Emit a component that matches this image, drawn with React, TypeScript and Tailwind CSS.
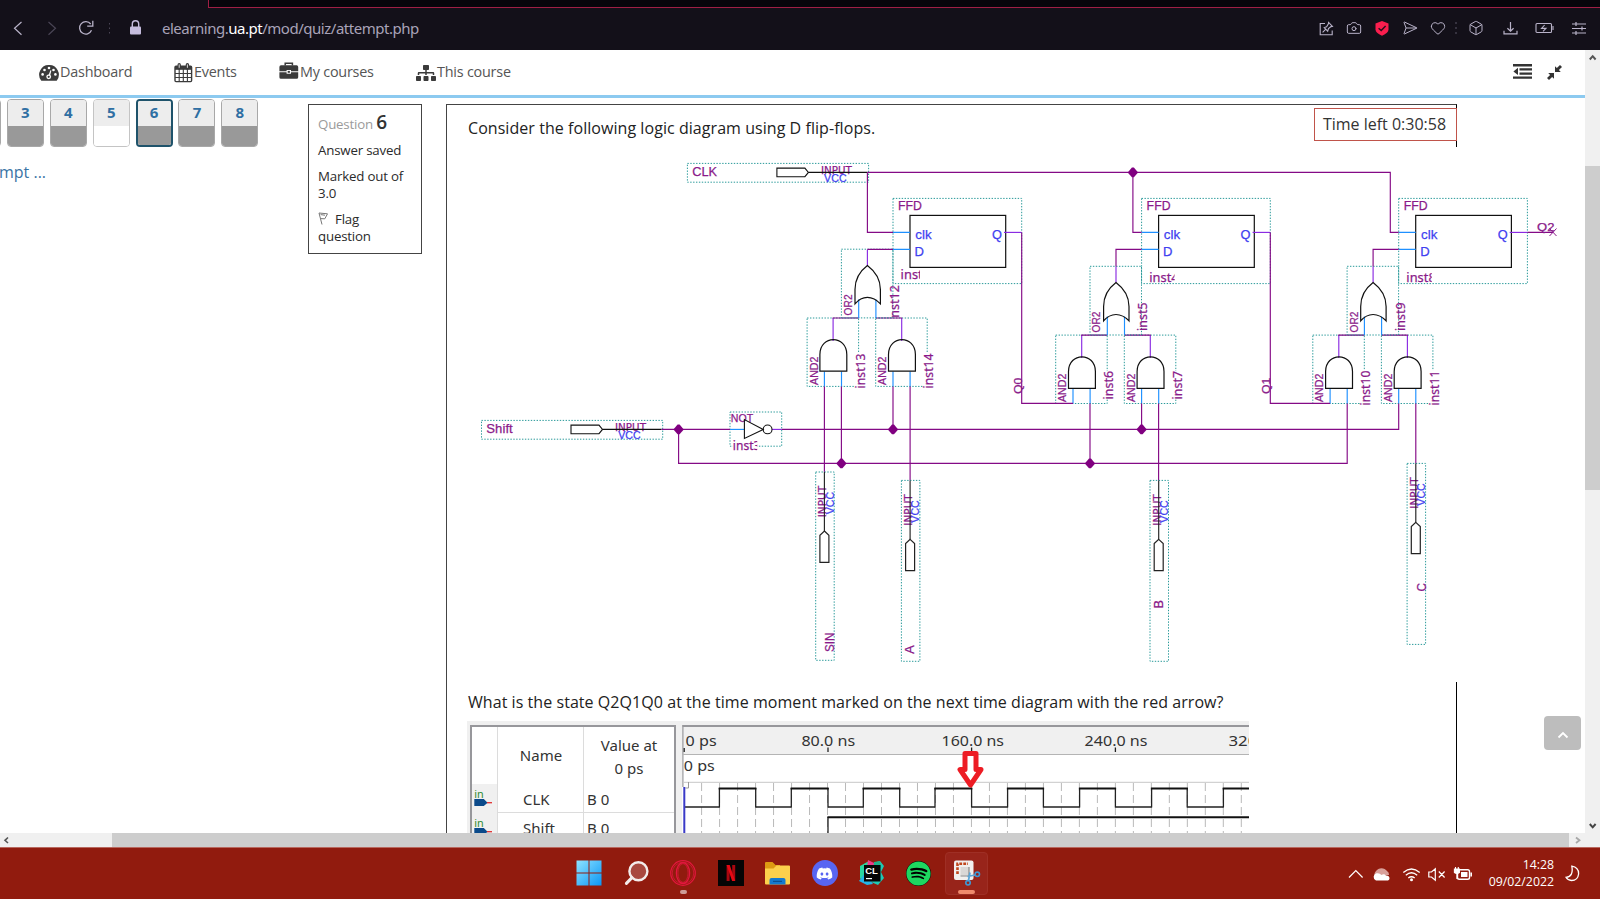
import React from "react";
import { Heart, Camera, Box, SendHorizontal } from "lucide-react";
import { FaSitemap, FaSpotify, FaDiscord } from "react-icons/fa";

const PURPLE = "#840a86";
const VIOLET = "#8a2be2";
const SKY = "#1e90ff";
const TEAL = "#2a9a9a";
const UI = "'Noto Sans', sans-serif";

/* ---------- schematic primitives ---------- */

function Wire({ d, c = PURPLE }: { d: string; c?: string }) {
  return <path d={d} fill="none" stroke={c} strokeWidth={1.15} />;
}

function Dotted({ x1, y1, x2, y2 }: { x1: number; y1: number; x2: number; y2: number }) {
  return (
    <rect x={x1} y={y1} width={x2 - x1} height={y2 - y1} fill="none" stroke={TEAL} strokeWidth={1} strokeDasharray="1.4 1.5" />
  );
}

function Label(props: {
  x: number; y: number; t: string; w?: number; size?: number; c?: string; font?: string; up?: boolean; weight?: number;
}) {
  const { x, y, t, w, size = 12.5, c = "#8a1a8a", font = "'Liberation Sans', sans-serif", up, weight } = props;
  return (
    <text
      x={up ? 0 : x}
      y={up ? 0 : y}
      transform={up ? `translate(${x} ${y}) rotate(-90)` : undefined}
      fill={c}
      stroke={c}
      strokeWidth={weight ? 0 : 0.25}
      fontSize={size}
      fontWeight={weight}
      fontFamily={font}
      textLength={w}
      lengthAdjust="spacingAndGlyphs"
    >
      {t}
    </text>
  );
}

const WIDE = "'Noto Sans', sans-serif";
const MONO = "'DejaVu Sans', sans-serif";

function Node({ x, y }: { x: number; y: number }) {
  return <path d={`M${x - 5.2} ${y}L${x - 1} ${y - 4.8}H${x + 1}L${x + 5.2} ${y}L${x + 1} ${y + 4.8}H${x - 1}Z`} fill="#800080" />;
}

function InputPinH({ x, y, name, w }: { x: number; y: number; name: string; w: number }) {
  return (
    <g>
      <Dotted x1={x} y1={y - 9} x2={x + 181.2} y2={y + 9.8} />
      <Label x={x + 4.8} y={y + 3.6} t={name} w={w} size={13} />
      <path d={`M${x + 89.5} ${y - 4.3}H${x + 117.5}L${x + 121} ${y}L${x + 117.5} ${y + 4.3}H${x + 89.5}Z`} fill="none" stroke="#111" strokeWidth={1.1} />
      <Label x={x + 133.5} y={y + 1.8} t="INPUT" w={31} size={11} font={MONO} />
      <Label x={x + 136.7} y={y + 9.4} t="VCC" w={22.5} size={11} c="#4040f0" />
      <Wire d={`M${x + 121} ${y}H${x + 180}`} c="#111" />
    </g>
  );
}

function InputPinV({ x, y, bottom, name, nx, ny, w }: {
  x: number; y: number; bottom: number; name: string; nx: number; ny: number; w: number;
}) {
  return (
    <g>
      <Dotted x1={x - 8.7} y1={y} x2={x + 9.8} y2={bottom} />
      <Label x={x + 1.8} y={y + 45.3} t="INPUT" w={31.5} size={10.5} font={MONO} up />
      <Label x={x + 9.2} y={y + 42.3} t="VCC" w={22.5} size={11} c="#4040f0" up />
      <Wire d={`M${x} ${y}V${y + 59}`} c="#222" />
      <path d={`M${x} ${y + 59}L${x + 4.5} ${y + 63.2}V${y + 90.3}H${x - 4.5}V${y + 63.2}Z`} fill="none" stroke="#222" strokeWidth={1.2} />
      <Label x={nx} y={ny} t={name} w={w} size={12.5} up />
    </g>
  );
}

function FlipFlop({ x, inst, dy, cut }: { x: number; inst: string; dy: number; cut: number }) {
  return (
    <g>
      <Dotted x1={x} y1={198.4} x2={x + 128.7} y2={283.6} />
      <rect x={x + 17} y={215.4} width={95.7} height={52} fill="none" stroke="#111" strokeWidth={1.2} />
      <Wire d={`M${x} 232.4h17M${x} 249.4h17`} c={SKY} />
      <Wire d={`M${x + 111} 232.4h17.7`} c={VIOLET} />
      <Label x={x + 5} y={210} t="FFD" w={24} size={13} />
      <Label x={x + 22.2} y={239} t="clk" w={16.5} size={13.5} c="#4040f0" />
      <Label x={x + 21.5} y={256} t="D" w={9.5} size={13.5} c="#4040f0" />
      <Label x={x + 99} y={239} t="Q" w={10} size={13.5} c="#4040f0" />
      <svg x={x + 6} y={266} width={cut - 6} height={17} viewBox={`${x + 6} 266 ${cut - 6} 17`}>
        <Label x={x + 7.6} y={dy} t={inst} size={12.8} font={WIDE} />
      </svg>
    </g>
  );
}

function OrGate({ x, y, inst, base, len }: { x: number; y: number; inst: string; base: number; len: number }) {
  return (
    <g>
      <Dotted x1={x - 26} y1={y - 16.2} x2={x + 25.5} y2={y + 52.5} />
      <Wire d={`M${x} ${y}v-16`} c={VIOLET} />
      <Wire d={`M${x - 8.7} ${y + 34}V${y + 52.5}M${x + 8.5} ${y + 34}V${y + 52.5}`} c={SKY} />
      <path
        d={`M${x} ${y}C${x - 8} ${y + 6} ${x - 12.4} ${y + 15} ${x - 12.4} ${y + 24}V${y + 38.4}Q${x - 7} ${y + 32} ${x} ${y + 32}T${x + 13} ${y + 38.4}V${y + 24}C${x + 13} ${y + 15} ${x + 8} ${y + 6} ${x} ${y}Z`}
        fill="none" stroke="#111" strokeWidth={1.2}
      />
      <Label x={x - 15.6} y={y + 50} t="OR2" w={21} size={11} up />
      <svg x={x + 18} y={y + 10} width={16} height={42.5} viewBox={`${x + 18} ${y + 10} 16 42.5`}>
        <Label x={x + 31.4} y={base} t={inst} w={len} size={12.8} font={WIDE} up />
      </svg>
    </g>
  );
}

function AndGate({ x, y, inst }: { x: number; y: number; inst: string }) {
  const two = inst.length > 5;
  return (
    <g>
      <Dotted x1={x - 26} y1={y} x2={x + 25.5} y2={y + 68.4} />
      <rect x={x + 22} y={two ? y + 35 : y + 36} width={10} height={two ? 35 : 28} fill="#fff" />
      <Wire d={`M${x} ${y}v23`} c={VIOLET} />
      <Wire d={`M${x - 8.7} ${y + 53.4}v15M${x + 8.4} ${y + 53.4}v15`} c={SKY} />
      <path d={`M${x - 13.2} ${y + 53.2}V${y + 36.5}C${x - 13.2} ${y + 16.8} ${x + 13.7} ${y + 16.8} ${x + 13.7} ${y + 36.5}V${y + 53.2}Z`} fill="none" stroke="#111" strokeWidth={1.2} />
      <Label x={x - 15.4} y={y + 67} t="AND2" w={28.5} size={11} up />
      <Label x={x + 31.6} y={two ? y + 70.4 : y + 64.4} t={inst} w={two ? 35 : 28.5} size={12.8} font={WIDE} up />
    </g>
  );
}

function Schematic() {
  const stages = [
    { dx: 0, dy: 0, ands: ["inst13", "inst14"] },
    { dx: 248.6, dy: 17.1, ands: ["inst6", "inst7"] },
    { dx: 505.7, dy: 17.1, ands: ["inst10", "inst11"] },
  ];
  return (
    <svg className="-ml-px block shrink-0 bg-white" width={1105} height={535} viewBox="467 147 1105 535">
      <InputPinH x={687.4} y={172.4} name="CLK" w={25} />
      <InputPinH x={481.5} y={429.4} name="Shift" w={26.5} />

      {stages.map((s) => (
        <g key={s.dx}>
          <AndGate x={833.1 + s.dx} y={318 + s.dy} inst={s.ands[0]} />
          <AndGate x={901.7 + s.dx} y={318 + s.dy} inst={s.ands[1]} />
          <Wire d={`M${832.5 + s.dx} ${318 + s.dy}h26.2M${876 + s.dx} ${318 + s.dy}h26.2`} />
        </g>
      ))}
      <OrGate x={867.4} y={265.4} inst="inst12" base={321} len={36} />
      <OrGate x={1116} y={282.5} inst="inst5" base={331} len={28.5} />
      <OrGate x={1373.1} y={282.5} inst="inst9" base={331} len={28.5} />
      <FlipFlop x={893} inst="inst" dy={278.6} cut={27} />
      <FlipFlop x={1141.6} inst="inst4" dy={282.2} cut={33} />
      <FlipFlop x={1398.7} inst="inst8" dy={282.2} cut={33} />

      <Dotted x1={730} y1={412} x2={781.7} y2={446.2} />
      <rect x={732.5} y={440} width={25} height={10} fill="#fff" />
      <Label x={730.8} y={421.8} t="NOT" w={22.5} size={11} />
      <svg x={731} y={438} width={26.2} height={14} viewBox="731 438 26.2 14">
        <Label x={732.8} y={449.8} t="inst3" size={12} font={WIDE} />
      </svg>
      <Wire d="M730 429.4h14.5" c={SKY} />
      <Wire d="M772 429.4h9.7" c={VIOLET} />
      <path d="M744.4 419.6V438.4L763.2 429.4Z" fill="none" stroke="#111" strokeWidth={1.1} />
      <circle cx={767.6} cy={429.4} r={4.4} fill="none" stroke="#111" strokeWidth={1.1} />

      <Wire d="M867.4 172.4H1390.3V232.4H1398.7M867.4 172.4V232.4H893M1132.9 172.4V232.4H1141.6" />
      <Wire d="M867.4 249.4H893M1116 266.5V249.4H1141.6M1373.1 266.5V249.4H1398.7" />
      <Wire d="M1021.7 232.4V403.4H1073M1270.3 232.4V403.4H1330.1M1527.4 232.4H1553" />
      <Wire d="M661.5 429.4H730M781.7 429.4H1398.7V403.5M678.6 429.4V463.4H1347.2V403.5" />
      <Wire d="M841.4 386.4V463.4M893 386.4V429.4M1090 403.5V463.4M1141.6 403.5V429.4" />
      <Wire d="M824.4 386.4V472M910.1 386.4V480.4M1158.6 403.5V480.4M1415.8 403.5V463.4" />
      <path d="M1549.500 228.500l7 7.500M1556.500 228.500l-7 7.500" stroke="#8a1a8a" strokeWidth={1} />

      <Node x={678.6} y={429.4} />
      <Node x={893} y={429.4} />
      <Node x={1141.6} y={429.4} />
      <Node x={841.4} y={463.4} />
      <Node x={1090} y={463.4} />
      <Node x={1132.9} y={172.4} />

      <Label x={1021.6} y={394} t="Q0" w={16.5} size={11.5} up />
      <Label x={1270.2} y={394} t="Q1" w={16.5} size={11.5} up />
      <Label x={1537} y={230.8} t="Q2" w={17.5} size={11.5} />

      <InputPinV x={824.4} y={472} bottom={660.3} name="SIN" nx={834} ny={652} w={19.5} />
      <InputPinV x={910.1} y={480.4} bottom={661.3} name="A" nx={914} ny={653.7} w={8.5} />
      <InputPinV x={1158.7} y={480.4} bottom={661.3} name="B" nx={1163.4} ny={608.4} w={8.5} />
      <InputPinV x={1415.8} y={463.4} bottom={644.4} name="C" nx={1425.5} ny={591.5} w={8.5} />
    </svg>
  );
}

/* ---------- timing diagram ---------- */

const EDGES = [719.4, 755.7, 791.3, 828, 863.3, 899.7, 935, 971.6, 1007.6, 1043.4, 1079.6, 1115.4, 1151.6, 1187.2, 1223.4];

function Waveform() {
  let low = "M684 807H719.4";
  let high = "";
  let sides = "";
  EDGES.forEach((x, i) => {
    const next = EDGES[i + 1] ?? 1249;
    sides += `M${x} 788V807.5`;
    if (i % 2 === 0) high += `M${x - 0.7} 788.4H${next + 0.7}`;
    else low += `M${x} 807H${next}`;
  });
  const grid = Array.from({ length: 31 }, (_, i) => 701.6 + i * 17.99);
  const scale: [string, number, number][] = [
    ["0 ps", 685.6, 31], ["80.0 ns", 801.4, 53.8], ["160.0 ns", 941.5, 62.5], ["240.0 ns", 1084.6, 62.9], ["320.0 ns", 1228.4, 66],
  ];
  return (
    <svg className="block shrink-0" width={567} height={112} viewBox="682 721 567 112">
      <rect x={682} y={721} width={567} height={34} fill="#f0f0f0" />
      <rect x={683} y={754} width={566} height={80} fill="#fff" />
      <rect x={682.5} y={725} width={567} height={2} fill="#97979b" />
      <rect x={682.3} y={725} width={1.2} height={62} fill="#97979b" />
      <rect x={683} y={754} width={566} height={1} fill="#b4b4b4" />
      <rect x={684} y={781.8} width={565} height={1} fill="#c8c8c8" />
      {scale.map(([t, x, w]) => (
        <Label key={t} x={x} y={746} t={t} w={w} size={15} c="#333" font={UI} weight={400} />
      ))}
      <Label x={683.8} y={771} t="0 ps" w={31} size={15} c="#333" font={UI} weight={400} />
      <path d="M684.2 748V752M828 747.5V752M971.6 747.5V752M1115.4 747.5V752" stroke="#222" strokeWidth={1.3} />
      {grid.map((x) => (
        <path key={x} d={`M${x} 783V833`} stroke="#b9b9b9" strokeWidth={1} strokeDasharray="8 4" />
      ))}
      <path d={low} stroke="#222" strokeWidth={1.3} fill="none" />
      <path d={sides} stroke="#222" strokeWidth={1.3} fill="none" />
      <path d={high} stroke="#111" strokeWidth={2} fill="none" />
      <path d="M828 833V817" stroke="#222" strokeWidth={1.3} />
      <path d="M827.4 817.2H1249" stroke="#111" strokeWidth={2} />
      <path d="M688.5 782v6h-3" stroke="#999" fill="none" />
      <rect x={683.3} y={787} width={2} height={46} fill="#3a3ac8" />
      <path d="M965 753.5H976V769.5H981L970.5 785L960 769.5H965Z" fill="#fff" stroke="#ed1c24" strokeWidth={5} strokeLinejoin="round" />
    </svg>
  );
}

function SignalRow({ name, h }: { name: string; h: string }) {
  return (
    <div className={`flex shrink-0 ${h}`}>
      <div className="w-[26px] border-r border-[#dcdcdc] bg-[#f0f0f0]">
        <svg width={25} height={28} viewBox="472 784 25 28" className="block">
          <text x={474.3} y={798} fontSize={11.5} fill="#2e8b2e" fontFamily={UI} textLength={9.5} lengthAdjust="spacingAndGlyphs">in</text>
          <path d="M474.3 799h9.500l3.800 3.700-3.800 3.300h-9.500z" fill="#0b4a8a" />
          <path d="M487 802.7h5" stroke="#e03030" strokeWidth={1.3} />
        </svg>
      </div>
      <div className="w-[86px] border-r border-b border-[#dcdcdc] pl-[25px] text-[15px] leading-[31px]">{name}</div>
      <div className="grow border-b border-[#dcdcdc] pl-[3px] text-[15px] leading-[31px]">B 0</div>
    </div>
  );
}

function SignalTable() {
  return (
    <div className="flex h-[112px] w-[215px] shrink-0 bg-[#f0f0f0] pt-[4px] pl-[3px] font-['Noto_Sans',sans-serif]">
      <div className="flex w-[206px] flex-col overflow-hidden border-x-2 border-t-2 border-[#97979b] bg-white text-[#333]">
        <div className="flex h-[57px] shrink-0">
          <div className="w-[26px] border-r border-[#dcdcdc]" />
          <div className="w-[86px] border-r border-[#dcdcdc] pt-[13px] pl-px text-center text-[15px] leading-[30px]">Name</div>
          <div className="grow pt-[7px] text-center text-[15px] leading-[22.5px]">
            Value at
            <br />0 ps
          </div>
        </div>
        <SignalRow name="CLK" h="h-[29px]" />
        <SignalRow name="Shift" h="h-[29px]" />
      </div>
    </div>
  );
}

/* ---------- browser chrome ---------- */

function BrowserBar() {
  return (
    <div className="flex h-[50px] shrink-0 flex-col bg-[#131019]">
      <div className="flex h-[8px] shrink-0">
        <div className="ml-[208px] grow border-b border-l border-[#a01f45] bg-[#07050b]" />
      </div>
      <div className="flex h-[40px] items-center text-[#b9b3c9]">
        <svg width={160} height={40} viewBox="0 8 160 40" fill="none" className="shrink-0">
          <path d="M21.5 22L14.5 28.3L21.5 34.8" stroke="#b9b3c9" strokeWidth={1.2} />
          <path d="M48.5 22L55.5 28.3L48.5 34.8" stroke="#4a4555" strokeWidth={1.2} />
          <path d="M91.5 30.3A6.2 6.2 0 1 1 90.7 24" stroke="#b9b3c9" strokeWidth={1.3} />
          <path d="M92.8 20.8V26.2H87.2" stroke="#b9b3c9" strokeWidth={1.3} />
          <path d="M109.5 23v11" stroke="#4a4555" strokeDasharray="1.5 3" />
          <rect x={130} y={26.6} width={11} height={8} rx={1} fill="#c5bcdd" />
          <path d="M132.3 27V24a3.2 3.2 0 0 1 6.4 0v3" stroke="#c5bcdd" strokeWidth={1.4} />
        </svg>
        <div className="ml-[2px] w-[300px] font-['Noto_Sans',sans-serif] text-[15px] tracking-[-0.48px] whitespace-nowrap text-[#a9a3b8]">
          elearning.<span className="text-white">ua.pt</span>/mod/quiz/attempt.php
        </div>
        <div className="ml-auto flex items-center pr-[13px]">
          <svg width={15} height={15} viewBox="0 0 15 15" fill="none" stroke="currentColor" strokeWidth={1.1}>
            <path d="M6 2.500H1.200V13.800H13.200V9.500M3.600 11.400L6.600 8.400M5.200 6.600L8.700 10.100L9.500 7.500L12 5.600L13.400 5.400L9.600 1.400L9.400 2.900L7.600 5.700Z" />
          </svg>
          <Camera className="ml-[12px]" size={16} strokeWidth={1.5} />
          <svg className="ml-[13px]" width={14} height={15} viewBox="0 0 14 15">
            <path d="M7 0L13.5 2.4V8.6Q13.5 12 7 14.8Q.5 12 .5 8.6V2.4Z" fill="#fa1e4e" />
            <path d="M3.6 7.2L6.2 9.6L10.6 5" fill="none" stroke="#26101a" strokeWidth={1.4} />
          </svg>
          <SendHorizontal className="ml-[13px]" size={16} strokeWidth={1.5} />
          <Heart className="ml-[12px]" size={16} strokeWidth={1.5} />
          <svg className="ml-[8px]" width={4} height={14} viewBox="0 0 4 14"><path d="M2 1v12" stroke="#4a4555" strokeWidth={1.3} strokeDasharray="2 3" /></svg>
          <Box className="ml-[10px]" size={16} strokeWidth={1.5} />
          <svg className="ml-[19px]" width={15} height={15} viewBox="0 0 15 15" fill="none" stroke="currentColor" strokeWidth={1.2}>
            <path d="M7.5 1V10M4.4 7.2L7.5 10.2L10.6 7.2M1 9.7V12.8H14V9.7" />
          </svg>
          <svg className="ml-[17px]" width={19} height={12} viewBox="0 0 19 12" fill="none" stroke="currentColor" strokeWidth={1.1}>
            <rect x={1} y={1.5} width={15.5} height={9} rx={1} />
            <path d="M18 4v4M9.6 3L6.5 6.4H11L8 9.4" />
          </svg>
          <svg className="ml-[17px]" width={16} height={15} viewBox="0 0 16 15" fill="none" stroke="currentColor" strokeWidth={1.2}>
            <path d="M1 3h14M1 7.5h14M1 12h14M5 1v4M11 5.5v4M5 10v4" />
          </svg>
        </div>
      </div>
    </div>
  );
}

/* ---------- site header ---------- */

function GaugeIcon() {
  return (
    <svg width={20} height={16} viewBox="0 0 20 16">
      <path d="M10 0A9.6 9.6 0 0 0 2 15.2Q2.2 15.7 2.8 15.7H17.2Q17.8 15.7 18 15.2A9.6 9.6 0 0 0 10 0Z" fill="#3b3b3b" />
      <g fill="#fff">
        <circle cx={3.6} cy={9.4} r={1.3} /><circle cx={5.5} cy={5} r={1.3} /><circle cx={10} cy={3} r={1.3} />
        <circle cx={14.5} cy={5} r={1.3} /><circle cx={16.4} cy={9.4} r={1.3} /><circle cx={9.7} cy={11.8} r={2.4} />
        <path d="M9.2 11L11.4 5.2L12.4 5.5L10.9 11.6Z" />
      </g>
      <circle cx={9.7} cy={11.8} r={1.1} fill="#3b3b3b" />
    </svg>
  );
}

function CalendarIcon() {
  return (
    <svg width={19} height={20} viewBox="0 0 19 20" fill="none" stroke="#3b3b3b">
      <rect x={1} y={3.2} width={16.6} height={15.4} rx={1} strokeWidth={1.4} />
      <path d="M1 5H17.6" strokeWidth={3.6} />
      <path d="M1 10.5H17.6M1 14.5H17.6M5.2 6V18.5M9.3 6V18.5M13.4 6V18.5" strokeWidth={1.1} />
      <path d="M5.2 1.8V5M13.4 1.8V5" strokeWidth={3.4} strokeLinecap="round" />
      <path d="M5.2 1.4V4.8M13.4 1.4V4.8" stroke="#ddd" strokeWidth={1} />
    </svg>
  );
}

function BriefcaseIcon() {
  return (
    <svg width={20} height={18} viewBox="0 0 20 18">
      <path d="M6.2 3.4V1.2H13.4V3.4" fill="none" stroke="#3b3b3b" strokeWidth={1.5} />
      <path d="M2 3.3H17.6Q19.2 3.3 19.2 4.9V9.2H12V8H7.6V9.2H.4V4.9Q.4 3.3 2 3.3Z" fill="#3b3b3b" />
      <path d="M.4 10.2H7.6V11.8H12V10.2H19.2V15.2Q19.2 16.8 17.6 16.8H2Q.4 16.8 .4 15.2Z" fill="#3b3b3b" />
      <rect x={8.7} y={8.9} width={2.2} height={1.9} fill="#3b3b3b" />
    </svg>
  );
}

function NavItem({ icon, label, w }: { icon: React.ReactNode; label: string; w: string }) {
  return (
    <div className={`flex ${w} items-center gap-[1px] whitespace-nowrap`}>
      {icon}
      <span className="-mt-[2px]">{label}</span>
    </div>
  );
}

function SiteHeader() {
  return (
    <header className="flex h-[48px] shrink-0 border-b-[3px] border-[#8ccaf0] bg-white pl-[39px] text-[14.4px] tracking-[-0.22px] text-[#555]">
      <NavItem icon={<GaugeIcon />} label="Dashboard" w="w-[135px]" />
      <NavItem icon={<CalendarIcon />} label="Events" w="w-[105px]" />
      <NavItem icon={<span className="-mt-[3px]"><BriefcaseIcon /></span>} label="My courses" w="w-[137px]" />
      <NavItem icon={<FaSitemap size={20} color="#3b3b3b" />} label="This course" w="w-[120px]" />
      <div className="mr-[23px] ml-auto flex items-center gap-[15px]">
        <svg className="-mt-[2px]" width={19} height={15} viewBox="0 0 19 15" fill="#333">
          <path d="M0 0H19V2.4H0ZM6.5 4.2H19V6.6H6.5ZM6.5 8.4H19V10.8H6.5ZM0 12.4H19V14.8H0ZM5 3.8V11L.4 7.4Z" />
        </svg>
        <svg width={15} height={15} viewBox="0 0 15 15" fill="#333">
          <path d="M8 7V1.2L9.9 3.1L13 0L15 2L11.9 5.1L13.8 7ZM7 8V13.8L5.1 11.9L2 15L0 13L3.1 9.9L1.2 8Z" />
        </svg>
      </div>
    </header>
  );
}

/* ---------- quiz page ---------- */

function QuizButton({ n, state }: { n: string; state: "done" | "empty" | "current" }) {
  const frame = state === "current" ? "border-2 border-[#1f536b]" : state === "empty" ? "border border-[#c4c4c4]" : "border border-[#a8a8a8]";
  return (
    <div className={`flex h-[48px] w-[37px] shrink-0 flex-col overflow-hidden rounded-[4px] ${frame}`}>
      <div className={`${state === "current" ? "h-[25px] leading-[23px]" : "h-[26px] leading-[25px]"} shrink-0 bg-[#ededed] text-center text-[15px] font-bold text-[#2f6fa3]`}>{n}</div>
      <div className={`grow ${state === "empty" ? "bg-white" : "bg-[#999]"}`} />
    </div>
  );
}

function Sidebar() {
  return (
    <aside className="flex w-[308px] shrink-0 flex-col overflow-hidden pt-[1px]">
      <div className="-ml-[36px] flex gap-[5.9px]">
        <QuizButton n="2" state="done" />
        <QuizButton n="3" state="done" />
        <QuizButton n="4" state="done" />
        <QuizButton n="5" state="empty" />
        <QuizButton n="6" state="current" />
        <QuizButton n="7" state="done" />
        <QuizButton n="8" state="done" />
      </div>
      <div className="mt-[13px] -ml-px text-[16px] leading-[24px] text-[#3a73a5]">mpt ...</div>
    </aside>
  );
}

function QuestionInfo() {
  return (
    <div className="mt-[6px] flex h-[150px] w-[114px] shrink-0 flex-col border border-[#444] pl-[9px] text-[13.3px] leading-[17.3px] tracking-[-0.2px] text-[#2b2b2b]">
      <div className="mt-[5px] h-[24px] leading-[24px] whitespace-nowrap text-[#9b9b9b]">
        Question <span className="text-[19px] font-semibold text-[#333]">6</span>
      </div>
      <div className="mt-[8px] whitespace-nowrap">Answer saved</div>
      <div className="mt-[9px] leading-[17px] whitespace-nowrap">Marked out of<br />3.0</div>
      <div className="mt-[9px] leading-[17px]">
        <svg className="mr-[7px] inline-block align-[-1px]" width={10} height={13} viewBox="0 0 10 13" fill="none" stroke="#777" strokeWidth={1}>
          <path d="M1 1L4 12.5M1 1L9.5 1.8L6.8 6.8L2.6 6.6M2.6 2.6L7 3.2" />
        </svg>
        Flag<br />question
      </div>
    </div>
  );
}

function VerticalScrollbar() {
  return (
    <div className="flex w-[15px] shrink-0 flex-col items-center bg-[#f0f0f0]">
      <svg width={15} height={15} viewBox="0 0 15 15"><path d="M4.8 9.5L7.7 6.2L10.6 9.5" fill="none" stroke="#555" strokeWidth={2} /></svg>
      <div className="mt-[101px] h-[324px] w-full bg-[#cdcdcd]" />
      <svg className="mt-auto" width={15} height={15} viewBox="0 0 15 15"><path d="M4.8 6L7.7 9.3L10.6 6" fill="none" stroke="#444" strokeWidth={2} /></svg>
    </div>
  );
}

function HorizontalScrollbar() {
  return (
    <div className="flex h-[14px] shrink-0 items-center bg-[#f0f0f0]">
      <svg width={14} height={14} viewBox="0 0 14 14"><path d="M8 4.5L5 7.3L8 10" fill="none" stroke="#555" strokeWidth={1.6} /></svg>
      <div className="ml-[98px] h-full w-[1457px] bg-[#cdcdcd]" />
      <svg className="ml-[2px]" width={14} height={14} viewBox="0 0 14 14"><path d="M5 4.5L8.5 7.3L5 10" fill="none" stroke="#a8a8a8" strokeWidth={1.8} /></svg>
    </div>
  );
}

function Page() {
  return (
    <div className="flex h-[783px] shrink-0">
      <div className="relative flex w-[1585px] shrink-0 flex-col overflow-hidden bg-white">
        <SiteHeader />
        <div className="flex grow overflow-hidden">
          <Sidebar />
          <QuestionInfo />
          <main className="mt-[6px] ml-[24px] flex h-[740px] w-[1011px] shrink-0 flex-col border-t border-r border-l border-[#444] border-r-black pl-[21px] text-[16px] tracking-[0.055px] text-[#222]">
            <p className="h-[42px] shrink-0 pt-[11px] leading-[24px] whitespace-nowrap">Consider the following logic diagram using D flip-flops.</p>
            <Schematic />
            <p className="h-[39px] shrink-0 pt-[8px] leading-[24px] whitespace-nowrap">
              What is the state Q2Q1Q0 at the time moment marked on the next time diagram with the red arrow?
            </p>
            <div className="-ml-px flex shrink-0 tracking-normal">
              <SignalTable />
              <Waveform />
            </div>
          </main>
        </div>
        <div className="absolute top-[58px] left-[1314px] flex h-[33px] w-[143px] items-center justify-center border border-[#c0534a] bg-white pr-[2px] pb-[2px] text-[16px] whitespace-nowrap text-[#333]">
          Time left 0:30:58
        </div>
        <div className="absolute top-[666px] left-[1544px] flex h-[34px] w-[37px] items-center justify-center rounded-[4px] bg-[#bdbdbd] pt-[3px]">
          <svg width={12} height={8} viewBox="0 0 12 8"><path d="M1.5 6.5L6 2L10.5 6.5" fill="none" stroke="#fff" strokeWidth={1.8} /></svg>
        </div>
      </div>
      <VerticalScrollbar />
    </div>
  );
}

/* ---------- taskbar ---------- */

function TaskIcon({ children }: { children: React.ReactNode }) {
  return <div className="flex h-[26px] w-[47px] shrink-0 items-center justify-center">{children}</div>;
}

function Taskbar() {
  return (
    <div className="flex h-[52px] shrink-0 border-t border-[#b8685f] bg-[#911b0e]">
      <div className="ml-[565px] flex pt-[12px]">
        <TaskIcon>
          <svg width={26} height={26} viewBox="0 0 26 26">
            <defs><linearGradient id="win" x1="0" y1="0" x2="1" y2="1"><stop offset="0" stopColor="#8fe3ff" /><stop offset="1" stopColor="#0a96f5" /></linearGradient></defs>
            <path d="M.5.5H12.5V12.5H.5ZM13.5.5H25.5V12.5H13.5ZM.5 13.5H12.5V25.5H.5ZM13.5 13.5H25.5V25.5H13.5Z" fill="url(#win)" />
          </svg>
        </TaskIcon>
        <TaskIcon>
          <svg width={26} height={26} viewBox="0 0 26 26" fill="none">
            <circle cx={15.4} cy={11.3} r={9} fill="#a9483f" stroke="#f3eceb" strokeWidth={2.4} />
            <path d="M9 17.6L3.4 23.4" stroke="#f3eceb" strokeWidth={3} strokeLinecap="round" />
          </svg>
        </TaskIcon>
        <div className="flex w-[48px] flex-col items-center">
          <svg width={26} height={26} viewBox="0 0 26 26" fill="none" stroke="#e3173e" className="shrink-0">
            <circle cx={13} cy={13} r={12.3} strokeWidth={1.2} />
            <circle cx={13} cy={13} r={10.8} strokeWidth={0.7} />
            <ellipse cx={13} cy={13} rx={6.6} ry={10.4} strokeWidth={1.3} />
            <ellipse cx={13} cy={13} rx={5.1} ry={9.4} strokeWidth={0.7} />
          </svg>
          <div className="mt-[4px] h-[4px] w-[7px] rounded-full bg-[#cf9c97]" />
        </div>
        <TaskIcon>
          <svg width={26} height={26} viewBox="0 0 26 26">
            <rect width={26} height={26} fill="#050505" />
            <path d="M8.6 5H11.6V21H8.6ZM14.2 5H17.2V21H14.2Z" fill="#a8070f" />
            <path d="M8.6 5H11.7L17.2 21H14.1Z" fill="#e50914" />
          </svg>
        </TaskIcon>
        <TaskIcon>
          <svg width={27} height={26} viewBox="0 0 27 26">
            <path d="M1 3Q1 2 2 2H8.5L11.5 5H16V10H1Z" fill="#dd9a12" />
            <path d="M1 8.5H9.5L12.5 5.5H25Q26 5.5 26 6.5V23.5Q26 24.5 25 24.5H2Q1 24.5 1 23.5Z" fill="#fcd04c" />
            <path d="M5.5 24.5V20Q5.5 18 7.5 18H19.5Q21.5 18 21.5 20V24.5Z" fill="#1479cf" />
            <path d="M9 21.4H18" stroke="#0a4f93" strokeWidth={1.2} />
          </svg>
        </TaskIcon>
        <TaskIcon>
          <div className="flex size-[26px] items-center justify-center rounded-full bg-[#5865f2]"><FaDiscord size={17} color="#fff" /></div>
        </TaskIcon>
        <TaskIcon>
          <svg width={26} height={26} viewBox="0 0 26 26">
            <path d="M1 6L10 1L12 13L1 19Z" fill="#2ad6a0" />
            <path d="M14 3L21 1L25 6L22 12L25 18L19 25L12 22Z" fill="#20c8b4" />
            <path d="M0 21L6 13L14 24L8 25Z" fill="#23b5e8" />
            <path d="M15 2L21 1L22 8L14 7Z" fill="#1fb38a" />
            <path d="M9 0L15 3L14 9L8 7Z" fill="#f0388a" />
            <rect x={5} y={5} width={16.5} height={16.5} fill="#060606" />
            <text x={6.2} y={14} fontSize={9.5} fontWeight={700} fill="#fff" fontFamily="'Liberation Sans', sans-serif">CL</text>
            <path d="M7 18.6H13" stroke="#fff" strokeWidth={1.2} />
          </svg>
        </TaskIcon>
        <TaskIcon>
          <div className="flex size-[25px] items-center justify-center rounded-full bg-black"><FaSpotify size={25} color="#1ed760" /></div>
        </TaskIcon>
        <div className="-mt-[8px] ml-[3px] flex h-[43px] w-[43px] flex-col items-center rounded-[4px] border border-[#9f2f25] bg-[#98241a] pt-[6px]">
          <svg width={28} height={27} viewBox="0 0 28 27" className="shrink-0">
            <rect x={1} y={1.5} width={19.5} height={19.5} rx={2} fill="#f1efee" />
            <path d="M4.5 15V4.8H15" fill="none" stroke="#c0451c" strokeWidth={2.6} strokeDasharray="2.8 1.2" />
            <rect x={7.5} y={8} width={8.5} height={8.5} fill="#d9d7d6" />
            <path d="M16 8V17H7.5" fill="none" stroke="#8a8a8a" strokeWidth={1.2} />
            <circle cx={24.3} cy={15.3} r={2.2} fill="none" stroke="#3e98d8" strokeWidth={1.6} />
            <circle cx={15} cy={23.8} r={2.2} fill="none" stroke="#3e98d8" strokeWidth={1.6} />
            <path d="M22 16L14.5 17.5M15.5 21.5L17 13.5" stroke="#5aa5d8" strokeWidth={1.7} />
          </svg>
          <div className="mt-[4px] h-[4px] w-[17px] rounded-full bg-[#f08a6c]" />
        </div>
      </div>
      <div className="ml-auto flex items-center pr-[20px] pb-[2px] text-white">
        <svg width={126} height={24} viewBox="1348 860 126 24" fill="none" stroke="#fff" className="shrink-0">
          <path d="M1349 876.5L1355.8 869.5L1362.6 876.5" strokeWidth={1.2} />
          <path d="M1374.500 875a5 5 0 0 1 1.500-5a6.500 6 0 0 1 11 0a4 4 0 0 1 2 4z" fill="#d9a09a" stroke="none" />
          <path d="M1376 879.500a3.800 3.800 0 0 1 .5-7.200q3-.6 5 1.600q2.500-1.500 4.500.5q3.500 .2 3.500 2.800q0 2.300-2.800 2.300z" fill="#fff" stroke="none" />
          <path d="M1403.3 871.5Q1411.5 864.5 1419.7 871.5M1405.8 874.3Q1411.5 869.3 1417.2 874.3M1408.3 877Q1411.5 874.5 1414.7 877" strokeWidth={1.3} />
          <circle cx={1411.5} cy={878.8} r={1.5} fill="#fff" stroke="none" />
          <path d="M1428.8 871V876H1431.5L1435.3 879.3V867.7L1431.5 871ZM1438.8 870.5L1444.6 876.5M1444.6 870.5L1438.8 876.5" strokeWidth={1.2} />
          <rect x={1457.5} y={868.7} width={12} height={9.6} rx={1.8} strokeWidth={1.4} />
          <rect x={1461} y={871} width={6.5} height={5} fill="#fff" stroke="none" />
          <path d="M1471.2 871.5v4" strokeWidth={1.6} />
          <path d="M1454.4 868h5v3.5q-2.5 2-5 0zM1455.5 868v-2M1458.3 868v-2M1456.9 872v6" strokeWidth={1.1} fill="#fff" />
        </svg>
        <div className="w-[80px] text-right text-[12.3px] leading-[17px] whitespace-nowrap">
          14:28
          <br />
          09/02/2022
        </div>
        <svg className="mt-[2px] ml-[11px]" width={15} height={17} viewBox="0 0 15 17" fill="none" stroke="#fff" strokeWidth={1.3}>
          <path d="M6.8 1.2Q13.8 2.4 13.6 9Q12.8 15.5 6.5 15.5Q2.6 15.3 1 12.3Q8.8 11.5 6.8 1.2Z" />
        </svg>
      </div>
    </div>
  );
}

export default function App() {
  return (
    <div className="flex h-[899px] w-[1600px] flex-col overflow-hidden bg-white font-['Open_Sans','Noto_Sans',sans-serif]">
      <BrowserBar />
      <Page />
      <HorizontalScrollbar />
      <Taskbar />
    </div>
  );
}
